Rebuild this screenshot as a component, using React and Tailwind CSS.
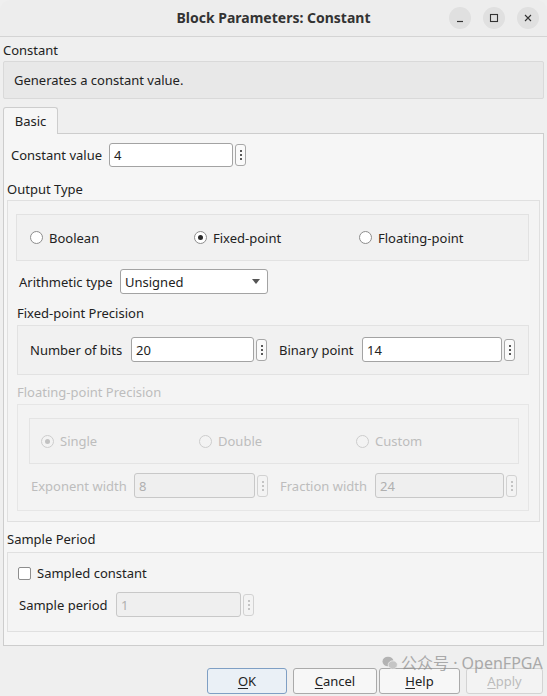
import React from 'react';

// Qt-style "Block Parameters" dialog for a Constant block

const Spin = ({ disabled = false }) => (
  <div
    className={`ml-[2px] flex h-[22px] w-[11px] flex-col items-center justify-center gap-[2px] rounded-[3px] border ${
      disabled ? 'border-[#d2d2d2] bg-[#f3f3f3]' : 'border-[#a8a8a8] bg-[#fafafa]'
    }`}
  >
    <span className={`h-[2px] w-[2px] rounded-full ${disabled ? 'bg-[#b5b5b5]' : 'bg-[#222]'}`} />
    <span className={`h-[2px] w-[2px] rounded-full ${disabled ? 'bg-[#b5b5b5]' : 'bg-[#222]'}`} />
    <span className={`h-[2px] w-[2px] rounded-full ${disabled ? 'bg-[#b5b5b5]' : 'bg-[#222]'}`} />
  </div>
);

const Field = ({ value, width, disabled = false }) => (
  <div
    style={{ width }}
    className={`flex h-[25px] items-center rounded-[3px] border pl-[4px] ${
      disabled ? 'border-[#c8c8c8] bg-[#efefef] text-[#b0b0b0]' : 'border-[#a3a3a3] bg-white text-[#222]'
    }`}
  >
    {value}
  </div>
);

const Radio = ({ label, checked = false, disabled = false }) => (
  <div className="flex items-center gap-[6px]">
    <span
      className={`flex h-[13px] w-[13px] items-center justify-center rounded-full border ${
        disabled ? 'border-[#cdcdcd] bg-[#f3f3f3]' : 'border-[#8d8d8d] bg-white'
      }`}
    >
      {checked && <span className={`h-[5px] w-[5px] rounded-full ${disabled ? 'bg-[#c2c2c2]' : 'bg-[#2a2a2a]'}`} />}
    </span>
    <span className={disabled ? 'text-[#bdbdbd]' : 'text-[#222]'}>{label}</span>
  </div>
);

const WindowButton = ({ children }) => (
  <div className="flex h-[22px] w-[22px] items-center justify-center rounded-full bg-[#e0e0e0]">{children}</div>
);

const DialogButton = ({ mnemonic, rest, width, primary = false, disabled = false }) => (
  <div
    style={{ width }}
    className={`flex h-[26px] items-center justify-center rounded-[3px] border text-[13px] ${
      primary
        ? 'border-[#7f9fc4] bg-[#eaf0f6] text-[#222]'
        : disabled
          ? 'border-[#d3d3d3] bg-[#f3f3f3] text-[#bcbcbc]'
          : 'border-[#aaaaaa] bg-[#f7f7f7] text-[#222]'
    }`}
  >
    <span className="underline underline-offset-2">{mnemonic}</span>
    {rest}
  </div>
);

const App = () => {
  return (
    <div className="relative h-[696px] w-[547px] overflow-hidden bg-[#efefef] font-['Noto_Sans','Open_Sans',sans-serif] text-[13px] leading-[18px] text-[#222]">
      {/* title bar */}
      <div className="grid h-[37px] grid-cols-[1fr_auto_1fr] items-center rounded-t-[10px] border-b border-[#d4d4d4] bg-[#ededed]">
        <div />
        <div className="text-[14px] font-bold text-[#333]">Block Parameters: Constant</div>
        <div className="flex items-center justify-end gap-[12px] pr-[8px]">
          <WindowButton>
            <svg width="10" height="10" viewBox="0 0 10 10">
              <path d="M2 8.5h6" stroke="#333" strokeWidth="1.2" />
            </svg>
          </WindowButton>
          <WindowButton>
            <svg width="10" height="10" viewBox="0 0 10 10">
              <rect x="1.5" y="1.5" width="7" height="7" fill="none" stroke="#333" strokeWidth="1.1" />
            </svg>
          </WindowButton>
          <WindowButton>
            <svg width="10" height="10" viewBox="0 0 10 10">
              <path d="M2 2l6 6M8 2l-6 6" stroke="#333" strokeWidth="1.1" />
            </svg>
          </WindowButton>
        </div>
      </div>

      <div className="px-[3px]">
        <div className="mt-[4px] h-[18px]">Constant</div>
        <div className="mt-[2px] flex h-[38px] w-[541px] items-center rounded-[2px] border border-[#d9d9d9] bg-[#e8e8e8] pl-[10px]">
          Generates a constant value.
        </div>

        {/* tab header */}
        <div className="mt-[8px] flex">
          <div className="relative z-10 -mb-px flex h-[27px] w-[55px] items-center justify-center rounded-t-[3px] border border-b-0 border-[#cdcdcd] bg-[#f6f6f6]">
            Basic
          </div>
        </div>

        {/* tab panel */}
        <div className="h-[513px] w-[541px] border border-[#cdcdcd] bg-[#f6f6f6] pl-[3px]">
          <div className="mt-[9px] flex h-[24px] items-center pl-[4px]">
            <span className="w-[98px]">Constant value</span>
            <div className="flex h-[24px] w-[124px] items-center rounded-[3px] border border-[#a3a3a3] bg-white pl-[4px]">4</div>
            <Spin />
          </div>

          <div className="mt-[13px] h-[18px]">Output Type</div>
          <div className="mt-[2px] h-[322px] w-[533px] border border-[#e0e0e0] bg-[#f4f4f4]">
            <div className="ml-[8px] mt-[13px] grid h-[47px] w-[513px] grid-cols-[164px_165px_1fr] items-center border border-[#e2e2e2] bg-[#f1f1f1] pl-[13px]">
              <Radio label="Boolean" />
              <Radio label="Fixed-point" checked />
              <Radio label="Floating-point" />
            </div>

            <div className="ml-[11px] mt-[8px] flex h-[25px] items-center">
              <span className="w-[101px]">Arithmetic type</span>
              <div className="flex h-[25px] w-[148px] items-center justify-between rounded-[3px] border border-[#a3a3a3] bg-white pl-[4px] pr-[7px]">
                <span>Unsigned</span>
                <svg width="8" height="5" viewBox="0 0 8 5">
                  <path d="M0 0h8L4 5z" fill="#555" />
                </svg>
              </div>
            </div>

            <div className="ml-[9px] mt-[10px] h-[18px]">Fixed-point Precision</div>
            <div className="ml-[9px] mt-[3px] h-[50px] w-[512px] border border-[#e2e2e2] bg-[#f1f1f1] pl-[12px] pt-[11px]">
              <div className="flex items-center">
                <span className="w-[101px]">Number of bits</span>
                <Field value="20" width={123} />
                <Spin />
                <span className="ml-[12px] w-[83px]">Binary point</span>
                <Field value="14" width={140} />
                <Spin />
              </div>
            </div>

            <div className="ml-[9px] mt-[8px] h-[18px] text-[#bdbdbd]">Floating-point Precision</div>
            <div className="ml-[9px] mt-[3px] h-[107px] w-[512px] border border-[#e6e6e6] bg-[#f3f3f3]">
              <div className="ml-[11px] mt-[13px] grid h-[46px] w-[490px] grid-cols-[158px_157px_1fr] items-center border border-[#e4e4e4] bg-[#f2f2f2] pl-[11px]">
                <Radio label="Single" checked disabled />
                <Radio label="Double" disabled />
                <Radio label="Custom" disabled />
              </div>
              <div className="ml-[13px] mt-[9px] flex items-center text-[#bdbdbd]">
                <span className="w-[103px]">Exponent width</span>
                <Field value="8" width={121} disabled />
                <Spin disabled />
                <span className="ml-[12px] w-[95px]">Fraction width</span>
                <Field value="24" width={129} disabled />
                <Spin disabled />
              </div>
            </div>
          </div>

          <div className="mt-[8px] h-[18px]">Sample Period</div>
          <div className="mt-[4px] h-[80px] w-[536px] border border-r-0 border-[#e0e0e0] bg-[#f4f4f4]">
            <div className="ml-[10px] mt-[11px] flex items-center gap-[6px]">
              <span className="h-[13px] w-[13px] rounded-[2px] border border-[#8d8d8d] bg-white" />
              <span>Sampled constant</span>
            </div>
            <div className="ml-[11px] mt-[10px] flex items-center">
              <span className="w-[97px]">Sample period</span>
              <Field value="1" width={125} disabled />
              <Spin disabled />
            </div>
          </div>
        </div>

        {/* dialog buttons */}
        <div className="mt-[22px] flex pl-[204px]">
          <DialogButton mnemonic="O" rest="K" width={80} primary />
          <div className="ml-[6px]">
            <DialogButton mnemonic="C" rest="ancel" width={84} />
          </div>
          <div className="ml-[2px]">
            <DialogButton mnemonic="H" rest="elp" width={81} />
          </div>
          <div className="ml-[6px]">
            <DialogButton mnemonic="A" rest="pply" width={77} disabled />
          </div>
        </div>
      </div>

      {/* account watermark over the button row */}
      <div className="pointer-events-none absolute left-[382px] top-[653px] flex items-center gap-[3px] whitespace-nowrap font-['Noto_Sans','Noto_Sans_CJK_SC',sans-serif] text-[16px] leading-[20px] text-[#8c8c8c] opacity-70">
        <svg width="16" height="14" viewBox="0 0 16 14">
          <ellipse cx="6" cy="5.5" rx="5.5" ry="4.8" fill="#9a9a9a" />
          <ellipse cx="10.8" cy="8.8" rx="4.6" ry="4" fill="#b4b4b4" stroke="#efefef" strokeWidth="0.8" />
        </svg>
        <span>公众号 · OpenFPGA</span>
      </div>
    </div>
  );
};

export default App;
